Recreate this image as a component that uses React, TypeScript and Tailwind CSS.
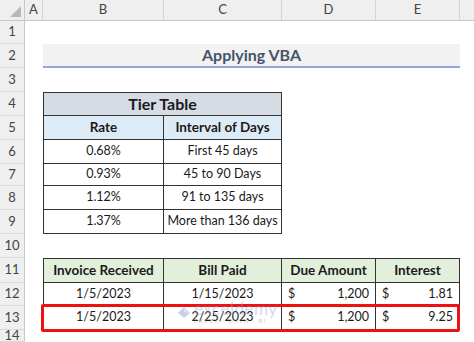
const font = { fontFamily: "Lato, 'Open Sans', sans-serif" };

const cols = ["A", "B", "C", "D", "E", ""];
const heights = [23, 24, 24, 24, 24, 24, 22, 24, 24, 24, 25, 23, 24, 12];

const tiers = [
  ["0.68%", "First 45 days"],
  ["0.93%", "45 to 90 Days"],
  ["1.12%", "91 to 135 days"],
  ["1.37%", "More than 136 days"],
];

const invoices = [
  ["1/5/2023", "1/15/2023", "1,200", "1.81"],
  ["1/5/2023", "2/25/2023", "1,200", "9.25"],
];

// one worksheet row: row number + the cells B..E (A and F stay empty)
const Row = ({ n, h, children }: { n: number; h: number; children?: React.ReactNode }) => (
  <div className="flex" style={{ height: h }}>
    <div className="w-[25px] shrink-0 bg-[#efefef] border-r border-[#c8c8c8] border-b border-b-[#dadada] flex items-center justify-center text-[13px] text-[#444]">
      {n}
    </div>
    <div className="w-[18px] shrink-0" />
    <div className="flex whitespace-nowrap">{children}</div>
  </div>
);

const Money = ({ v, w }: { v: string; w: string }) => (
  <div className={`${w} h-full flex items-center justify-between px-[6px] border-r border-b border-[#333]`}>
    <span>$</span>
    <span>{v}</span>
  </div>
);

export default function App() {
  return (
    <div className="relative w-[474px] h-[342px] overflow-hidden bg-white text-[#1a1a1a]" style={font}>
      {/* column headers */}
      <div className="flex h-[21px] bg-[#efefef] border-b border-[#c8c8c8] text-[13px] text-[#444]">
        <div className="w-[25px] shrink-0 relative border-r border-[#c8c8c8]">
          <div className="absolute right-[3px] bottom-[3px] w-0 h-0 border-l-[11px] border-l-transparent border-b-[11px] border-b-[#b8b8b8]" />
        </div>
        {cols.map((c, i) => (
          <div
            key={i}
            className={`shrink-0 flex items-center justify-center border-r border-[#d4d4d4] ${
              ["w-[18px]", "w-[121px]", "w-[118px]", "w-[94px]", "w-[84px]", "w-[20px]"][i]
            }`}
          >
            {c}
          </div>
        ))}
      </div>

      <Row n={1} h={heights[0]} />
      <Row n={2} h={heights[1]}>
        <div className="w-[417px] h-full bg-[#f2f2f2] border-b-2 border-[#8ea9db] flex items-center justify-center font-bold text-[16px] text-[#44546a]">
          Applying VBA
        </div>
      </Row>
      <Row n={3} h={heights[2]} />
      <Row n={4} h={heights[3]}>
        <div className="w-[239px] h-full bg-[#d6dce4] border border-[#333] flex items-center justify-center font-bold text-[16px]">
          Tier Table
        </div>
      </Row>
      <Row n={5} h={heights[4]}>
        <div className="w-[121px] h-full bg-[#ddebf7] border-l border-r border-b border-[#333] flex items-center justify-center font-bold text-[13.5px]">
          Rate
        </div>
        <div className="w-[118px] h-full bg-[#ddebf7] border-r border-b border-[#333] flex items-center justify-center font-bold text-[13.5px]">
          Interval of Days
        </div>
      </Row>
      {tiers.map(([rate, days], i) => (
        <Row key={i} n={6 + i} h={heights[5 + i]}>
          <div className="w-[121px] h-full border-l border-r border-b border-[#333] flex items-center justify-center text-[12.5px]">
            {rate}
          </div>
          <div className="w-[118px] h-full border-r border-b border-[#333] flex items-center justify-center text-[12.5px]">
            {days}
          </div>
        </Row>
      ))}
      <Row n={10} h={heights[9]} />
      <Row n={11} h={heights[10]}>
        {["Invoice Received", "Bill Paid", "Due Amount", "Interest"].map((t, i) => (
          <div
            key={t}
            className={`h-full bg-[#e2efda] border-t border-r border-b border-[#333] flex items-center justify-center font-bold text-[13.5px] ${
              ["w-[121px] border-l", "w-[118px]", "w-[94px]", "w-[84px]"][i]
            }`}
          >
            {t}
          </div>
        ))}
      </Row>
      {invoices.map(([rec, paid, due, interest], i) => (
        <Row key={i} n={12 + i} h={heights[11 + i]}>
          <div className="w-[121px] h-full border-l border-r border-b border-[#333] flex items-center justify-center text-[12.5px]">
            {rec}
          </div>
          <div className="w-[118px] h-full border-r border-b border-[#333] flex items-center justify-center text-[12.5px]">
            {paid}
          </div>
          <div className="flex text-[12.5px]">
            <Money v={due} w="w-[94px]" />
            <Money v={interest} w="w-[84px]" />
          </div>
        </Row>
      ))}
      <Row n={14} h={heights[13]} />

      {/* highlight box around row 13 */}
      <div className="absolute left-[41px] top-[304px] w-[419px] h-[28px] border-[3px] border-[#ee1111] rounded-[2px]" />

      {/* faint watermark */}
      <div className="absolute left-[176px] top-[300px] flex items-center gap-[2px] opacity-40 pointer-events-none">
        <svg width="16" height="16" viewBox="0 0 16 16">
          <path d="M2 9 L8 3 L14 9 L8 14 Z" fill="#7b8fb8" />
          <path d="M8 3 L14 9 L8 8 Z" fill="#a9b8d6" />
        </svg>
        <div className="flex flex-col leading-none">
          <span className="text-[17px] text-[#8ea2d4] tracking-[0.5px]">exceldemy</span>
          <span className="text-[6px] text-[#888] tracking-[1.5px] mt-[1px]">EXCEL · DATA · BI</span>
        </div>
      </div>
    </div>
  );
}
